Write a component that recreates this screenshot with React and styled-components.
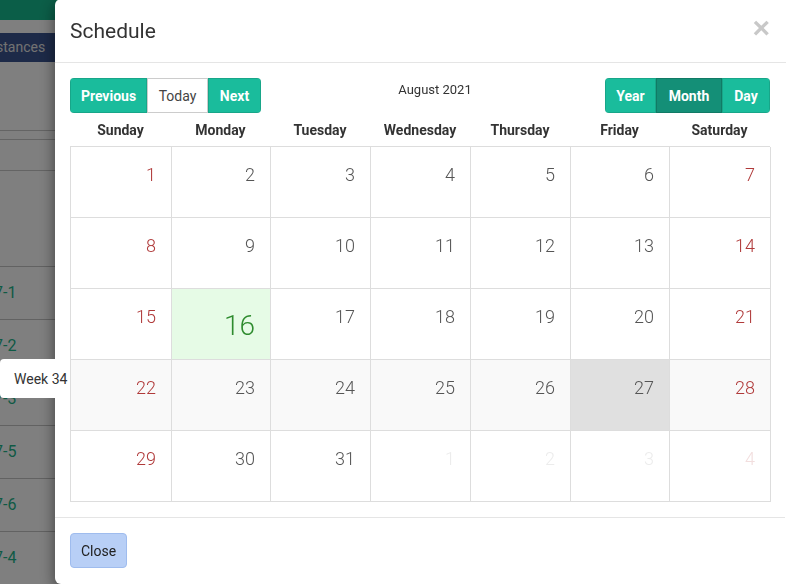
import React from 'react'
import styled, { createGlobalStyle } from 'styled-components'

const Global = createGlobalStyle`
  html, body { margin: 0; padding: 0; }
  body {
    font-family: Roboto, "DejaVu Sans Condensed", "Liberation Sans", sans-serif;
    color: #333;
    overflow: hidden;
    width: 786px;
    height: 584px;
  }
`

const weeks = [
  [1, 2, 3, 4, 5, 6, 7],
  [8, 9, 10, 11, 12, 13, 14],
  [15, 16, 17, 18, 19, 20, 21],
  [22, 23, 24, 25, 26, 27, 28],
  [29, 30, 31, 1, 2, 3, 4],
]
const dayNames = ['Sunday', 'Monday', 'Tuesday', 'Wednesday', 'Thursday', 'Friday', 'Saturday']
const bgRows = ['7-1', '7-2', '7-3', '7-5', '7-6', '7-4']

const App = () => {
  return (
    <>
      <Global />
      <Page>
        <TopBand />
        <Spacer h={13} />
        <NavBar>stances</NavBar>
        <Spacer h={68} />
        <SectionLine />
        <Spacer h={8} />
        <SectionLine />
        <Spacer h={30} />
        <SectionLine />
        <Spacer h={95} />
        {bgRows.map((r) => (
          <BgRow key={r}>{r}</BgRow>
        ))}
      </Page>
      <Overlay>
        <WeekTip>Week 34</WeekTip>
        <Modal>
          <Header>
            <Title>Schedule</Title>
            <CloseX>×</CloseX>
          </Header>
          <Body>
            <Toolbar>
              <BtnGroup>
                <Btn w={77}>Previous</Btn>
                <Btn w={61} plain>Today</Btn>
                <Btn w={53}>Next</Btn>
              </BtnGroup>
              <MonthLabel>August 2021</MonthLabel>
              <BtnGroup>
                <Btn w={51}>Year</Btn>
                <Btn w={66} active>Month</Btn>
                <Btn w={48}>Day</Btn>
              </BtnGroup>
            </Toolbar>
            <DayHeads>
              {dayNames.map((d) => (
                <DayHead key={d}>{d}</DayHead>
              ))}
            </DayHeads>
            <Grid>
              {weeks.map((w, wi) =>
                w.map((n, di) => {
                  const outside = wi === 4 && di > 2
                  const today = wi === 2 && n === 16
                  const weekend = di === 0 || di === 6
                  const hover = wi === 3
                  const selected = wi === 3 && n === 27
                  return (
                    <Cell
                      key={wi + '-' + di}
                      $today={today}
                      $hover={hover}
                      $selected={selected}
                    >
                      <Num $today={today} $weekend={weekend} $outside={outside}>
                        {n}
                      </Num>
                    </Cell>
                  )
                })
              )}
            </Grid>
          </Body>
          <Footer>
            <CloseBtn>Close</CloseBtn>
          </Footer>
        </Modal>
      </Overlay>
    </>
  )
}

export default App

const Page = styled.div`
  width: 786px;
  height: 584px;
  background: #fff;
  display: flex;
  flex-direction: column;
`

const TopBand = styled.div`
  height: 20px;
  background: #17bc90;
  flex-shrink: 0;
`

const Spacer = styled.div`
  height: ${(p) => p.h}px;
  flex-shrink: 0;
`

const NavBar = styled.div`
  height: 29px;
  flex-shrink: 0;
  background: #3a5490;
  color: #e4e4e4;
  font-size: 14px;
  line-height: 29px;
  text-indent: -4px;
`

const SectionLine = styled.div`
  height: 1px;
  flex-shrink: 0;
  background: #c8c8c8;
`

const BgRow = styled.div`
  height: 53px;
  flex-shrink: 0;
  box-sizing: border-box;
  border-top: 1px solid #c4c4c4;
  color: #1eb48a;
  font-size: 16px;
  line-height: 52px;
  text-indent: -6px;
`

const Overlay = styled.div`
  position: fixed;
  inset: 0;
  background: rgba(0, 0, 0, 0.5);
`

const Modal = styled.div`
  position: absolute;
  left: 55px;
  top: -1px;
  width: 760px;
  height: 585px;
  background: #fff;
  border-radius: 6px;
  box-shadow: 0 5px 15px rgba(0, 0, 0, 0.5);
  display: flex;
  flex-direction: column;
`

const Header = styled.div`
  height: 64px;
  box-sizing: border-box;
  border-bottom: 1px solid #e5e5e5;
  display: flex;
  align-items: center;
  justify-content: space-between;
  padding: 0 0 0 15px;
  width: 731px;
`

const Title = styled.div`
  font-size: 21px;
  color: #333;
  margin-top: 0;
`

const CloseX = styled.div`
  font-family: "Liberation Sans", sans-serif;
  font-size: 30px;
  font-weight: bold;
  color: #c8c8c8;
  margin-right: 16px;
  margin-top: -6px;
`

const Body = styled.div`
  padding: 15px 15px 15px 15px;
  width: 700px;
  border-bottom: 1px solid #e5e5e5;
`

const Toolbar = styled.div`
  display: flex;
  align-items: flex-start;
  justify-content: space-between;
  height: 35px;
`

const BtnGroup = styled.div`
  display: flex;
  border-radius: 4px;
  overflow: hidden;
`

const Btn = styled.div`
  width: ${(p) => p.w}px;
  height: 35px;
  box-sizing: border-box;
  display: flex;
  align-items: center;
  justify-content: center;
  font-size: 14px;
  font-weight: ${(p) => (p.plain ? 'normal' : 'bold')};
  color: ${(p) => (p.plain ? '#444' : '#fff')};
  background: ${(p) => (p.plain ? '#fff' : p.active ? '#148f77' : '#1abc9c')};
  border: 1px solid ${(p) => (p.plain ? '#ccc' : p.active ? '#117a65' : '#18a689')};
`

const MonthLabel = styled.div`
  font-size: 13px;
  color: #333;
  margin-top: 4px;
  margin-left: 4px;
`

const DayHeads = styled.div`
  display: grid;
  grid-template-columns: 101px 99px 100px 100px 100px 99px 101px;
  height: 33px;
  align-items: center;
`

const DayHead = styled.div`
  text-align: center;
  font-weight: bold;
  font-size: 14px;
  color: #333;
`

const Grid = styled.div`
  display: grid;
  grid-template-columns: 101px 99px 100px 100px 100px 99px 101px;
  grid-auto-rows: 71px;
  border-top: 1px solid #ddd;
  border-left: 1px solid #ddd;
`

const Cell = styled.div`
  border-right: 1px solid #ddd;
  border-bottom: 1px solid #ddd;
  background: ${(p) =>
    p.$selected ? '#e0e0e0' : p.$today ? '#e6fbe6' : p.$hover ? '#f9f9f9' : '#fff'};
  display: flex;
  justify-content: flex-end;
  align-items: flex-start;
  padding-right: 15px;
`

const Num = styled.div`
  font-size: ${(p) => (p.$today ? '28px' : '18px')};
  font-weight: 300;
  margin-top: ${(p) => (p.$today ? '20px' : '17px')};
  color: ${(p) =>
    p.$outside
      ? p.$weekend
        ? '#f2dede'
        : '#ececec'
      : p.$today
      ? '#2e8b2e'
      : p.$weekend
      ? '#b03a3a'
      : '#555'};
`

const Footer = styled.div`
  padding: 15px;
`

const CloseBtn = styled.div`
  width: 57px;
  height: 35px;
  box-sizing: border-box;
  border-radius: 4px;
  background: #b8cff6;
  border: 1px solid #9fbcee;
  display: flex;
  align-items: center;
  justify-content: center;
  font-size: 14px;
  color: #222;
`

const WeekTip = styled.div`
  position: absolute;
  left: 0;
  top: 359px;
  width: 70px;
  height: 39px;
  box-sizing: border-box;
  background: #fff;
  border-radius: 4px 0 0 4px;
  padding-left: 14px;
  display: flex;
  align-items: center;
  font-size: 14px;
  white-space: nowrap;
  color: #333;
  z-index: 2;
`
